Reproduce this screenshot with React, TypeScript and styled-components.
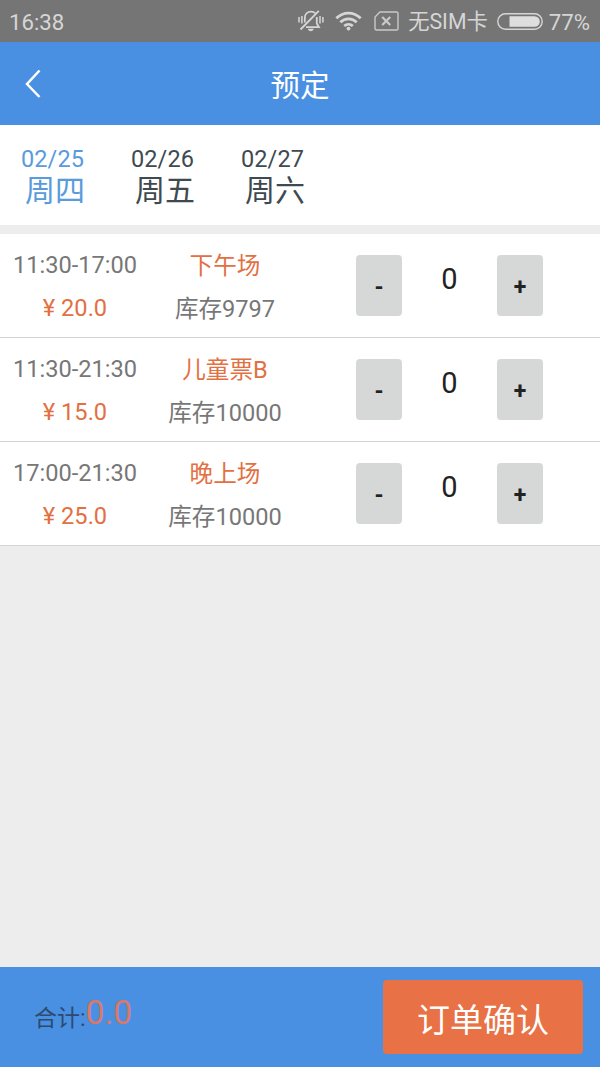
import React from 'react';
import styled, { createGlobalStyle } from 'styled-components';

const Global = createGlobalStyle`
  * { box-sizing: border-box; }
  body { margin: 0; background: #ededed; font-family: Roboto, "Noto Sans CJK SC", sans-serif; }
`;
const Screen = styled.div`width: 600px; height: 1067px; display: flex; flex-direction: column; background: #ededed; overflow: hidden;`;
const StatusBar = styled.div`height: 42px; background: #757575; color: #d6d6d6; display: flex; align-items: center; padding: 0 10px 0 9px; font-size: 22.2px; white-space: nowrap;`;
const Clock = styled.span`padding-top: 1px;`;
const StatusIcons = styled.div`margin-left: auto; display: flex; align-items: center;`;
const Carrier = styled.span`font-size: 21.3px; line-height: 40px; margin: 0 9px 0 9px; padding-top: 1px;`;
const Percent = styled.span`margin-left: 6px; padding-top: 1px;`;
const Header = styled.header`height: 83px; background: #4990e2; color: #fff; display: flex; align-items: center; padding: 0 24px;`;
const Title = styled.h1`flex: 1; margin: 0 20px 0 0; text-align: center; font-size: 29.5px; font-weight: 400; line-height: 40px; padding-top: 4px;`;
const Dates = styled.nav`height: 109px; background: #fff; border-bottom: 9px solid #ededed; display: flex; padding-top: 20px;`;
const DateTab = styled.div<{ $active?: boolean }>`width: 110px; padding-left: 21px; color: ${p => p.$active ? '#5a9bdc' : '#3e4a50'};`;
const Day = styled.div`font-size: 23.5px; line-height: 28px; letter-spacing: .1px;`;
const Week = styled.div`font-size: 30px; line-height: 34px; padding: 1px 0 0 4px;`;
const Row = styled.section`height: 104px; background: #fff; border-bottom: 1px solid #d4d4d4; display: flex;`;
const Col = styled.div`width: 150px; text-align: center; color: #777; font-size: 23.6px; line-height: 43px; padding-top: 10px; white-space: nowrap;`;
const Accent = styled.div`color: #e27042;`;
const Name = styled(Accent)`line-height: 45px; margin-bottom: -1px;`;
const Stepper = styled.div`display: flex; padding: 21px 0 0 56px;`;
const StepButton = styled.button`width: 46px; height: 61px; border: 0; border-radius: 4px; padding: 3px 0 0; background: #d6d7d7; color: #222; font: 700 23px Roboto, sans-serif;`;
const Count = styled.div`width: 95px; text-align: center; font-size: 29px; line-height: 49px; color: #222;`;
const Footer = styled.footer`height: 100px; margin-top: auto; background: #4990e2; display: flex; align-items: center; padding: 0 17px 0 34px;`;
const Total = styled.div`color: #2d4a70; font-size: 23px; display: flex; align-items: flex-start; line-height: 40px;`;
const Label = styled.span`padding-top: 4px;`;
const Sum = styled.span`color: #d9786a; font-size: 33.5px; line-height: 36px;`;
const Confirm = styled.button`width: 200px; height: 74px; margin-left: auto; border: 0; border-radius: 4px; padding: 1px 0 0; background: #e87245; color: #fff; font: 400 33px Roboto, "Noto Sans CJK SC", sans-serif;`;

const MutedBell = () => (
  <svg width="26" height="22" viewBox="0 0 26 22" fill="none" stroke="#d6d6d6" strokeWidth="1.8">
    <path d="M6.800 12.500V8C6.800 4 9.500 1.600 13 1.600c1.800 0 3.100.5 4.100 1.500M18.800 7v6.500l2.200 3.700H8M2.500 19.500L20.800.8" />
    <path d="M1 7v5.500M3.900 6v7.500M22 6v7.500M24.900 7v5.500" strokeWidth="1.500" />
    <path d="M9.800 18.800h6c-.4 1.700-1.500 2.400-3 2.400s-2.600-.7-3-2.400z" fill="#d6d6d6" stroke="none" />
  </svg>
);
const Wifi = () => (
  <svg width="27" height="20" viewBox="0 0 27 20" fill="none" stroke="#d6d6d6" strokeWidth="2.700">
    <path d="M1.300 7.300c6.900-6.900 17.500-6.900 24.400 0M5.300 11.300c4.600-4.600 11.800-4.600 16.400 0M9.200 15c2.500-2.300 6.100-2.300 8.600 0" />
    <circle cx="13.500" cy="17.600" r="1.900" fill="#d6d6d6" stroke="none" />
  </svg>
);
const NoSim = () => (
  <svg width="25" height="20" viewBox="0 0 25 20" fill="none" stroke="#c9c9c9" strokeWidth="1.400">
    <path d="M6 1h16.500q1.500 0 1.500 1.500v15q0 1.500-1.500 1.500h-20Q1 19 1 17.500V6z" />
    <path d="M8.200 6l8 8M16.200 6l-8 8" strokeWidth="2.300" />
  </svg>
);
const Battery = () => (
  <svg width="46" height="17" viewBox="0 0 46 17" fill="none" stroke="#d6d6d6" strokeWidth="1.400">
    <rect x=".8" y=".8" width="44.400" height="15.400" rx="7.700" />
    <path d="M12.500 3.200H37.500a5.300 5.300 0 0 1 0 10.600H12.500z" fill="#dedede" stroke="none" />
  </svg>
);
const Gap = styled.span<{ $w: number }>`width: ${p => p.$w}px;`;

const dates = [['02/25', '周四'], ['02/26', '周五'], ['02/27', '周六']];
const sessions = [
  { time: '11:30-17:00', price: '20.0', name: '下午场', stock: 9797 },
  { time: '11:30-21:30', price: '15.0', name: '儿童票B', stock: 10000 },
  { time: '17:00-21:30', price: '25.0', name: '晚上场', stock: 10000 },
];

export default function App() {
  return <><Global /><Screen>
    <StatusBar><Clock>16:38</Clock><StatusIcons><MutedBell /><Gap $w={11} /><Wifi /><Gap $w={12} /><NoSim /><Carrier>无SIM卡</Carrier><Battery /><Percent>77%</Percent></StatusIcons></StatusBar>
    <Header><svg width="20" height="30" viewBox="0 0 20 30" fill="none" stroke="#fff" strokeWidth="2.500"><path d="M15.500 1.500L3 15l12.500 13" /></svg><Title>预定</Title></Header>
    <Dates>{dates.map(([d, w], i) => <DateTab key={d} $active={i === 0}><Day>{d}</Day><Week>{w}</Week></DateTab>)}</Dates>
    {sessions.map(s => <Row key={s.time}><Col>{s.time}<Accent>¥ {s.price}</Accent></Col><Col><Name>{s.name}</Name>库存{s.stock}</Col>
      <Stepper><StepButton>-</StepButton><Count>0</Count><StepButton>+</StepButton></Stepper></Row>)}
    <Footer><Total><Label>合计:</Label><Sum>0.0</Sum></Total><Confirm>订单确认</Confirm></Footer>
  </Screen></>;
}
